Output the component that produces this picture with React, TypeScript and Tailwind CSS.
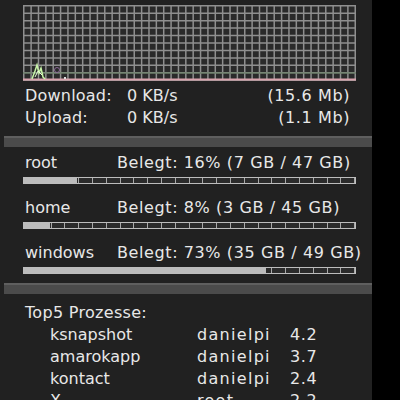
const disks = [
  { name: 'root', used: 16, label: 'Belegt: 16% (7 GB / 47 GB)' },
  { name: 'home', used: 8, label: 'Belegt: 8% (3 GB / 45 GB)' },
  { name: 'windows', used: 73, label: 'Belegt: 73% (35 GB / 49 GB)' },
];

const procs = [
  { name: 'ksnapshot', user: 'danielpi', cpu: '4.2' },
  { name: 'amarokapp', user: 'danielpi', cpu: '3.7' },
  { name: 'kontact', user: 'danielpi', cpu: '2.4' },
  { name: 'X', user: 'root', cpu: '2.2' },
];

const NetGraph = () => {
  const w = 333;
  const h = 76;
  const cols = 45;
  const rows = 10;
  return (
    <svg width={w} height={h} viewBox={`0 0 ${w} ${h}`} className="block">
      <rect x="0" y="0" width={w} height={h} fill="#2a2a2a" />
      {Array.from({ length: cols + 1 }).map((_, i) => {
        const x = 0.75 + (i * (w - 1.5)) / cols;
        return <line key={'v' + i} x1={x} y1="0" x2={x} y2={h} stroke="#8f8f8f" strokeWidth="1.5" />;
      })}
      {Array.from({ length: rows + 1 }).map((_, j) => {
        const y = 0.75 + (j * (h - 1.5)) / rows;
        return <line key={'h' + j} x1="0" y1={y} x2={w} y2={y} stroke="#8f8f8f" strokeWidth="1.5" />;
      })}
      <line x1="0" y1="68" x2={w} y2="68" stroke="#5f7a5a" strokeWidth="1" />
      <line x1="0" y1="74.5" x2={w} y2="74.5" stroke="#d9a3ad" strokeWidth="2" />
      <polyline points="9,74 12,66 14,60 16,68 18,63 20,72 22,74" fill="none" stroke="#c8f5a8" strokeWidth="1.5" />
      <polyline points="12,72 15,66 19,70" fill="none" stroke="#e8ffd8" strokeWidth="1" />
      <circle cx="34" cy="65" r="2.5" fill="none" stroke="#8a6a96" strokeWidth="1" />
      <rect x="41" y="72" width="2" height="2" fill="#e0e0e0" />
    </svg>
  );
};

const Meter = ({ used }: { used: number }) => (
  <div className="relative flex h-[7px] w-[333px] border border-[#bdbdbd] bg-[#2b2b2b]">
    {Array.from({ length: 24 }).map((_, i) => (
      <div key={i} className="flex-1 border-r border-[#a9a9a9] last:border-r-0" />
    ))}
    <div className="absolute left-0 top-0 bottom-0 bg-[#bcbcbc]" style={{ width: `${used}%` }} />
  </div>
);

const Separator = () => (
  <div className="ml-[4px] h-[11px] border-t-2 border-[#5f5f5f] bg-[#4b4b4b]" />
);

export default function App() {
  return (
    <div className="flex h-[400px] w-[400px] overflow-hidden bg-black font-['DejaVu_Sans',sans-serif] text-[16px] text-[#e8e8e8]">
      <div className="w-[372px] bg-[#212121] pt-[5px]">
        <div className="ml-[23px]">
          <NetGraph />
        </div>

        <div className="mt-[4px] pl-[25px] pr-[22px] leading-[22px]">
          <div className="flex">
            <span className="w-[102px] tracking-[0.2px]">Download:</span>
            <span>0 KB/s</span>
            <span className="ml-auto tracking-[0.6px]">(15.6 Mb)</span>
          </div>
          <div className="flex">
            <span className="w-[102px] tracking-[0.2px]">Upload:</span>
            <span>0 KB/s</span>
            <span className="ml-auto tracking-[0.6px]">(1.1 Mb)</span>
          </div>
        </div>

        <div className="mt-[7px]">
          <Separator />
        </div>

        <div className="mt-[5px] flex flex-col gap-[13px]">
          {disks.map((d) => (
            <div key={d.name}>
              <div className="flex pl-[25px] leading-[22px]">
                <span className="w-[92px]">{d.name}</span>
                <span className="tracking-[0.6px]">{d.label}</span>
              </div>
              <div className="ml-[23px] mt-[3px]">
                <Meter used={d.used} />
              </div>
            </div>
          ))}
        </div>

        <div className="mt-[9px]">
          <Separator />
        </div>

        <div className="mt-[8px] pl-[25px] leading-[22px]">
          <div className="tracking-[0.3px]">Top5 Prozesse:</div>
          {procs.map((p) => (
            <div key={p.name} className="flex">
              <span className="ml-[25px] w-[147px]">{p.name}</span>
              <span className="w-[93px] tracking-[1.3px]">{p.user}</span>
              <span className="tracking-[0.6px]">{p.cpu}</span>
            </div>
          ))}
        </div>
      </div>
    </div>
  );
}
